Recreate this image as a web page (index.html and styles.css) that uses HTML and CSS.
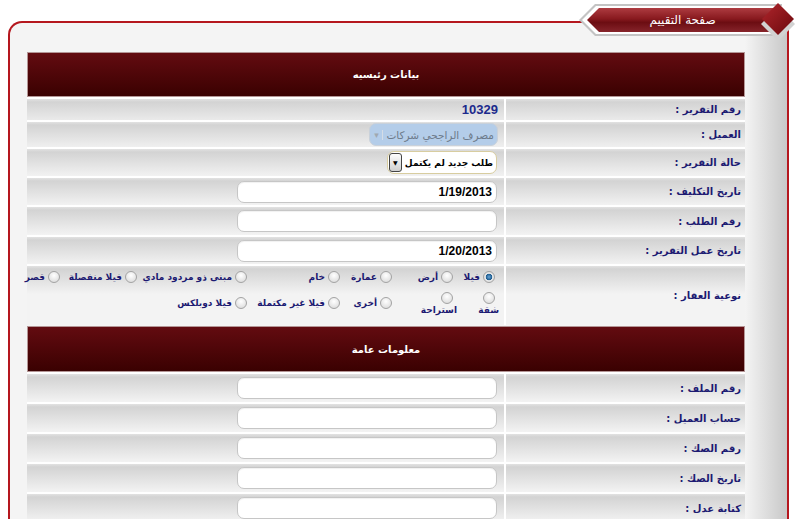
FILE: index.html
```html
<!DOCTYPE html>
<html lang="ar">

<head>
    <meta charset="UTF-8">
    <title>صفحة التقييم</title>
    <link rel="stylesheet" href="styles.css">
</head>

<body>

    <div class="panel">

        <!-- Title tab -->
        <div class="tab">
            <svg class="tab-art" width="230" height="42" viewBox="0 0 230 42">
                <defs>
                    <linearGradient id="rib" x1="0" y1="0" x2="0" y2="1">
                        <stop offset="0" stop-color="#ad3b40"/>
                        <stop offset="0.45" stop-color="#88191e"/>
                        <stop offset="0.6" stop-color="#6c0d12"/>
                        <stop offset="1" stop-color="#86242a"/>
                    </linearGradient>
                    <linearGradient id="dia" x1="0" y1="0" x2="1" y2="1">
                        <stop offset="0" stop-color="#b0262c"/>
                        <stop offset="1" stop-color="#6a080d"/>
                    </linearGradient>
                </defs>
                <polygon points="9,20 25,4 212,4 212,36 25,36" fill="#c4c4c4"/>
                <polygon points="12,20 26,6 212,6 212,34 26,34" fill="#ffffff"/>
                <polygon points="17,20 29,8 212,8 212,32 29,32" fill="url(#rib)"/>
                <polygon points="208,7 225,24 208,41 191,24" fill="#d2d2d2"/>
                <polygon points="208,3 224,19 208,35 192,19" fill="url(#dia)"/>
            </svg>
            <span class="tab-title">صفحة التقييم</span>
        </div>

        <div class="form-table">

            <div class="section-head">بيانات رئيسيه</div>

            <div class="row h21">
                <div class="label">رقم التقرير :</div>
                <div class="value"><span class="report-no">10329</span></div>
            </div>

            <div class="row h25">
                <div class="label">العميل :</div>
                <div class="value">
                    <div class="combo combo-disabled">
                        <span class="combo-text">مصرف الراجحي شركات</span>
                        <span class="combo-btn">&#9662;</span>
                    </div>
                </div>
            </div>

            <div class="row h27">
                <div class="label">حالة التقرير :</div>
                <div class="value">
                    <div class="combo combo-status">
                        <span class="combo-text">طلب جديد لم يكتمل</span>
                        <span class="combo-btn">&#9660;</span>
                    </div>
                </div>
            </div>

            <div class="row h27">
                <div class="label">تاريخ التكليف :</div>
                <div class="value"><input type="text" class="field" value="1/19/2013"></div>
            </div>

            <div class="row h28">
                <div class="label">رقم الطلب :</div>
                <div class="value"><input type="text" class="field" value=""></div>
            </div>

            <div class="row h27">
                <div class="label">تاريخ عمل التقرير :</div>
                <div class="value"><input type="text" class="field" value="1/20/2013"></div>
            </div>

            <div class="row h59">
                <div class="label">نوعية العقار :</div>
                <div class="value value-top">
                    <div class="radio-list">
                        <label class="opt"><input type="radio" name="kind" checked><span>فيلا</span></label>
                        <label class="opt"><input type="radio" name="kind"><span>أرض</span></label>
                        <label class="opt"><input type="radio" name="kind"><span>عمارة</span></label>
                        <label class="opt"><input type="radio" name="kind"><span>خام</span></label>
                        <label class="opt"><input type="radio" name="kind"><span>مبنى ذو مردود مادي</span></label>
                        <label class="opt"><input type="radio" name="kind"><span>فيلا منفصلة</span></label>
                        <label class="opt"><input type="radio" name="kind"><span>قصر</span></label>
                        <label class="opt opt-stack"><input type="radio" name="kind"><span>شقة</span></label>
                        <label class="opt opt-stack"><input type="radio" name="kind"><span>استراحة</span></label>
                        <label class="opt"><input type="radio" name="kind"><span>أخرى</span></label>
                        <label class="opt"><input type="radio" name="kind"><span>فيلا غير مكتملة</span></label>
                        <label class="opt"><input type="radio" name="kind"><span>فيلا دوبلكس</span></label>
                    </div>
                </div>
            </div>

            <div class="section-head second">معلومات عامة</div>

            <div class="row h28">
                <div class="label">رقم الملف :</div>
                <div class="value"><input type="text" class="field"></div>
            </div>

            <div class="row h28">
                <div class="label">حساب العميل :</div>
                <div class="value"><input type="text" class="field"></div>
            </div>

            <div class="row h28">
                <div class="label">رقم الصك :</div>
                <div class="value"><input type="text" class="field"></div>
            </div>

            <div class="row h28">
                <div class="label">تاريخ الصك :</div>
                <div class="value"><input type="text" class="field"></div>
            </div>

            <div class="row h28">
                <div class="label">كتابة عدل :</div>
                <div class="value"><input type="text" class="field"></div>
            </div>

        </div>
    </div>

</body>

</html>
```

FILE: styles.css
```css
/* General Styling */
body {
    margin: 0;
    background-color: #ffffff;
    font-family: "Liberation Sans", "DejaVu Sans", sans-serif;
}

/* Outer panel */
.panel {
    position: relative;
    width: 781px;
    margin: 21px 0 0 8px;
    box-sizing: border-box;
    padding: 29px 42px 0 17px;
    border: 2px solid #b5171e;
    border-bottom: none;
    border-radius: 14px 0 0 0;
    background: linear-gradient(to left, #c8c8c8, #f4f4f4 42px);
}

/* Title tab */
.tab {
    position: absolute;
    top: -23px;
    left: 560px;
    width: 230px;
    height: 42px;
}

.tab-art {
    display: block;
}

.tab-title {
    position: absolute;
    top: 11px;
    left: 30px;
    width: 165px;
    text-align: center;
    color: #ffffff;
    font-family: "DejaVu Sans", sans-serif;
    font-size: 12px;
    line-height: 18px;
}

/* Form table */
.form-table {
    width: 718px;
    direction: rtl;
}

.section-head {
    height: 45px;
    box-sizing: border-box;
    display: flex;
    align-items: center;
    justify-content: center;
    border: 1px solid #b49696;
    background: linear-gradient(#630b10, #3a0101);
    color: #ffffff;
    font-family: "DejaVu Sans", sans-serif;
    font-size: 10px;
    font-weight: bold;
}

.section-head.second {
    height: 46px;
    margin-top: 1px;
}

.row {
    display: grid;
    grid-template-columns: 239px 1fr;
    border-top: 2px solid #ffffff;
    background: #f3f3f3 linear-gradient(#e2e2e2 0, #d3d3d3 3px, #f3f3f3 100%) no-repeat top / 100% 28px;
}

.h21 { height: 21px; }
.h25 { height: 25px; }
.h27 { height: 27px; }
.h28 { height: 28px; }
.h59 { height: 59px; }

.label {
    display: flex;
    align-items: center;
    padding-right: 4px;
    color: #1c1a72;
    font-family: "DejaVu Sans", sans-serif;
    font-size: 10px;
    font-weight: bold;
}

.value {
    display: flex;
    align-items: center;
    padding-right: 7px;
    border-right: 2px solid #ffffff;
}

.value-top {
    align-items: flex-start;
    padding-right: 0;
}

.report-no {
    margin-right: -1px;
    color: #1c2a8c;
    font-size: 13px;
    font-weight: bold;
}

/* Text inputs */
.field {
    width: 260px;
    height: 22px;
    box-sizing: border-box;
    margin: 0;
    padding: 0 4px;
    border: 1px solid #c6c6c6;
    border-radius: 7px;
    background-color: #ffffff;
    box-shadow: inset 0 1px 1px rgba(0, 0, 0, 0.06);
    font-family: "Liberation Sans", sans-serif;
    font-size: 12px;
    font-weight: bold;
    color: #000000;
    text-align: right;
    direction: ltr;
}

/* Drop downs */
.combo {
    display: flex;
    align-items: center;
    height: 23px;
    box-sizing: border-box;
    border-radius: 7px;
    font-family: "DejaVu Sans", sans-serif;
}

.combo-disabled {
    margin-right: -1px;
    padding-right: 3px;
    border: 1px solid #c9d1da;
    background-color: #b4cde9;
    color: #6d7b8b;
    font-size: 10.5px;
}

.combo-disabled .combo-btn {
    width: 12px;
    margin-right: 3px;
    border-right: 1px solid #d5dde6;
    color: #a0a8b0;
    font-size: 9px;
    text-align: center;
}

.combo-status {
    padding-right: 3px;
    border: 1px solid #d8cda0;
    background-color: #ffffff;
    color: #000000;
    font-size: 9px;
    font-weight: bold;
}

.combo-status .combo-btn {
    width: 11px;
    height: 17px;
    margin: 0 3px 0 1px;
    display: flex;
    align-items: center;
    justify-content: center;
    border: 1px solid #444;
    border-radius: 3px;
    background: linear-gradient(#fdfdfd, #cfcfcf);
    font-size: 6px;
}

/* Radio list */
.radio-list {
    display: grid;
    grid-template-columns: 42px 61px 52px 93px 110px 77px 32px;
    grid-template-rows: 22px 30px;
    align-items: center;
    padding-right: 9px;
}

.opt {
    display: flex;
    align-items: center;
    white-space: nowrap;
    color: #1c1a72;
    font-family: "DejaVu Sans", sans-serif;
    font-size: 9px;
    font-weight: bold;
}

.opt input {
    appearance: none;
    width: 12px;
    height: 12px;
    flex: none;
    margin: 0 0 0 3px;
    border: 1px solid #a3a3a3;
    border-radius: 50%;
    background: radial-gradient(circle at 50% 35%, #ffffff, #d6d6d6);
}

.opt input:checked {
    background: radial-gradient(circle, #6aa6d8 0, #1d5b8e 3px, #ececec 3.6px, #cccccc 100%);
}

.opt-stack {
    flex-direction: column;
    align-items: flex-start;
}

.opt-stack span {
    margin-right: -4px;
    margin-top: 1px;
}
```
